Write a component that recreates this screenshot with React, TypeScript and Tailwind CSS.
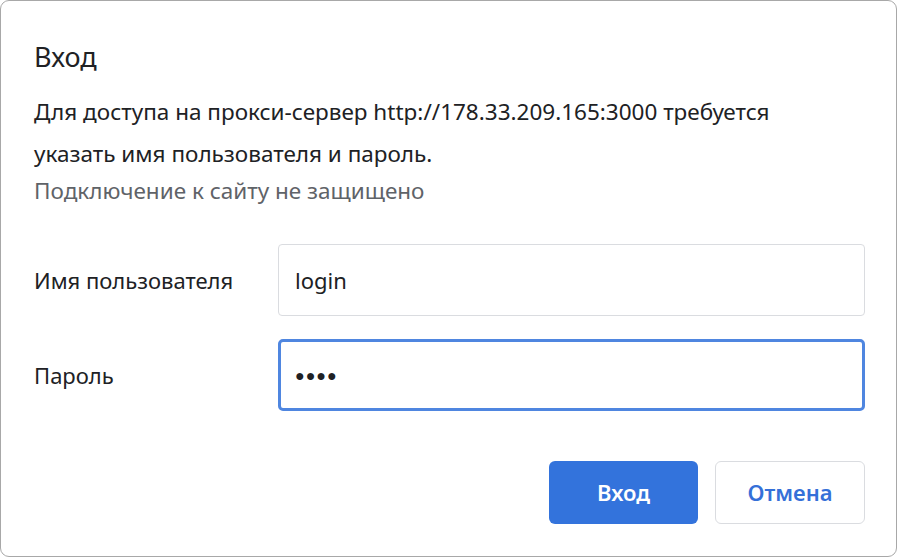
export default function App() {
  return (
    <div className="w-[898px] h-[558px] bg-white" style={{ fontFamily: '"Noto Sans", "Open Sans", sans-serif' }}>
      <div className="w-[897px] h-[557px] border border-[#a8a8a8] rounded-[9px] bg-white text-[#202124] pl-[33px] pr-[31px] pt-[38px] flex flex-col">
        <div className="text-[27px] leading-[36px]">Вход</div>
        <div className="mt-[16px] text-[22.5px] leading-[42px] w-[780px]">
          Для доступа на прокси-сервер http://178.33.209.165:3000 требуется указать имя пользователя и пароль.
        </div>
        <div className="text-[22.5px] leading-[32px] text-[#5f6368]">Подключение к сайту не защищено</div>

        <div className="mt-[37px] flex items-center">
          <div className="w-[244px] text-[22px]">Имя пользователя</div>
          <div className="flex-1 h-[72px] border border-[#dadce0] rounded-[4px] flex items-center pl-[16px] text-[22px]">
            login
          </div>
        </div>
        <div className="mt-[23px] flex items-center">
          <div className="w-[244px] text-[22px]">Пароль</div>
          <div className="flex-1 h-[72px] border-[3px] border-[#4f86e0] rounded-[5px] flex items-center pl-[14px]">
            <span className="tracking-[1px] text-[16px]">●●●●</span>
          </div>
        </div>

        <div className="mt-[50px] flex justify-end gap-[17px]">
          <button className="w-[149px] h-[63px] rounded-[6px] bg-[#3373dc] text-white text-[22px] font-semibold">Вход</button>
          <button className="w-[150px] h-[63px] rounded-[6px] border border-[#dadce0] bg-white text-[#3570d8] text-[22px] font-semibold">Отмена</button>
        </div>
      </div>
    </div>
  )
}
